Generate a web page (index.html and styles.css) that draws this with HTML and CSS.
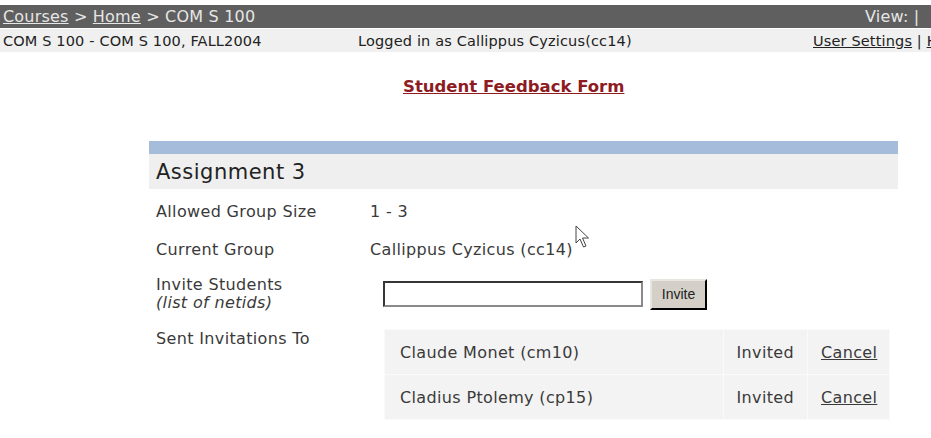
FILE: index.html
```html
<!DOCTYPE html>
<html lang="en">
<head>
  <meta charset="UTF-8" />
  <title>COM S 100 - Groups</title>
  <link rel="stylesheet" href="styles.css">
</head>
<body>
  <div class="page">
    <div class="topbar">
      <div class="crumbs"><a href="#">Courses</a> &gt; <a href="#">Home</a> &gt; COM S 100</div>
      <div class="view">View: |</div>
    </div>
    <div class="subbar">
      <div class="course">COM S 100 - COM S 100, FALL2004</div>
      <div class="login">Logged in as Callippus Cyzicus(cc14)</div>
      <div class="links"><a href="#">User Settings</a> | <a href="#">H</a></div>
    </div>

    <div class="page-title"><a href="#">Student Feedback Form</a></div>

    <div class="assignment">
      <div class="band"></div>
      <h2>Assignment 3</h2>

      <div class="field first">
        <div class="label">Allowed Group Size</div>
        <div class="value">1 - 3</div>
      </div>
      <div class="field">
        <div class="label">Current Group</div>
        <div class="value">Callippus Cyzicus (cc14)</div>
      </div>
      <div class="field invite">
        <div class="label">Invite Students<br><em>(list of netids)</em></div>
        <div class="value">
          <input type="text" class="netids" />
          <button class="invite-btn">Invite</button>
        </div>
      </div>
      <div class="field sent">
        <div class="label">Sent Invitations To</div>
        <div class="value">
          <table class="invites">
            <tr>
              <td class="name">Claude Monet (cm10)</td>
              <td class="status">Invited</td>
              <td class="action"><a href="#">Cancel</a></td>
            </tr>
            <tr>
              <td class="name">Cladius Ptolemy (cp15)</td>
              <td class="status">Invited</td>
              <td class="action"><a href="#">Cancel</a></td>
            </tr>
          </table>
        </div>
      </div>
    </div>

    <svg class="cursor" width="16" height="24" viewBox="0 0 16 24">
      <path d="M1 1 L1 18 L5 14 L8.5 22 L11 21 L7.5 13 L13.5 13 Z" fill="#fff" stroke="#444" stroke-width="1"/>
    </svg>
  </div>
</body>
</html>
```

FILE: styles.css
```css
body {
  margin: 0;
  overflow: hidden;
  font-family: "DejaVu Sans", Verdana, sans-serif;
  background: #ffffff;
  color: #333;
}

.page {
  position: relative;
  width: 931px;
  padding-top: 5px;
}

a {
  color: inherit;
}

.topbar {
  display: flex;
  align-items: center;
  height: 23px;
  padding: 0 3px;
  background: #5f5f5f;
  color: #e6e6e6;
  font-size: 16px;
  letter-spacing: 0.2px;
  white-space: nowrap;
}

.topbar a {
  color: #e6e6e6;
}

.crumbs {
  flex: none;
  width: 862px;
}

.subbar {
  display: flex;
  align-items: center;
  height: 23px;
  margin-top: 1px;
  padding: 0 3px;
  background: #f0f0f0;
  color: #222;
  font-size: 14.5px;
  letter-spacing: 0.15px;
  white-space: nowrap;
}

.subbar .course {
  flex: none;
  width: 355px;
}

.subbar .login {
  flex: none;
  width: 455px;
}

.subbar .links a {
  color: #222;
}

.page-title {
  margin-top: 25px;
  padding-left: 403px;
  line-height: 20px;
  font-size: 16.5px;
  font-weight: bold;
}

.page-title a {
  color: #8e1b22;
}

.assignment {
  width: 749px;
  margin: 44px 0 0 149px;
}

.band {
  height: 13px;
  background: #a5bddb;
}

.assignment h2 {
  margin: 0;
  height: 35px;
  line-height: 36px;
  padding-left: 7px;
  background: #efefef;
  font-size: 21px;
  letter-spacing: 0.5px;
  font-weight: normal;
  color: #222;
}

.field {
  display: grid;
  grid-template-columns: 221px 1fr;
  align-items: center;
  height: 38px;
  font-size: 16px;
  letter-spacing: 0.35px;
  color: #3a3a3a;
}

.field.first {
  margin-top: 3px;
}

.label {
  padding-left: 7px;
}

.field.invite {
  height: 52px;
  line-height: 18px;
}

.field.invite .value {
  display: flex;
  align-items: center;
  padding-left: 13px;
}

.netids {
  width: 256px;
  height: 22px;
  margin: 0;
  padding: 0;
  border: 2px inset #8a8a8a;
  background: #fff;
}

.invite-btn {
  margin-left: 7px;
  height: 31px;
  width: 57px;
  padding: 0;
  font-family: "Liberation Sans", Arial, sans-serif;
  font-size: 14px;
  letter-spacing: 0;
  color: #222;
  background: #d4d0c8;
  border: 2px outset #e8e6e0;
  border-right-color: #555;
  border-bottom-color: #555;
}

.field.sent {
  height: auto;
  align-items: start;
  padding-top: 9px;
}

.field.sent .value {
  padding-left: 14px;
}

.invites {
  width: 506px;
  border-collapse: collapse;
  background: #f3f3f3;
}

.invites td {
  height: 44px;
  border: 1px solid #fafafa;
  padding: 0;
  white-space: nowrap;
}

.invites .name {
  padding-left: 15px;
  width: 323px;
}

.invites .status {
  text-align: right;
  padding-right: 13px;
}

.invites .action {
  padding-left: 13px;
  width: 68px;
}

.cursor {
  position: absolute;
  left: 575px;
  top: 225px;
}
```
